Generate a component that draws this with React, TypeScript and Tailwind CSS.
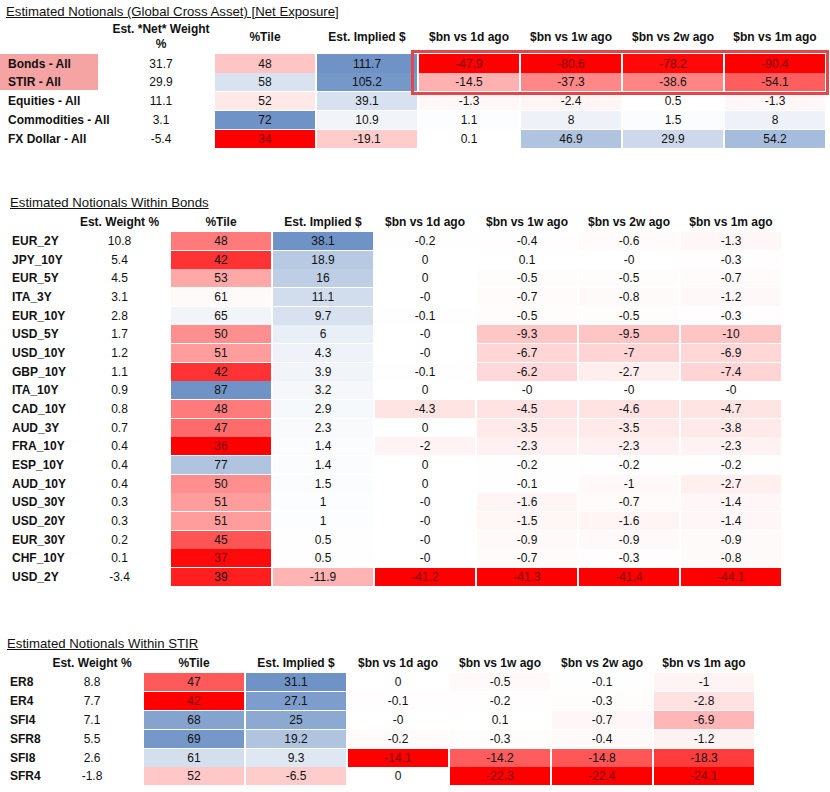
import React from "react";

const DARK_RED = "#7a0000";

function bgFor(t: number): string | undefined {
  if (t === 0) return undefined;
  if (t < 0) {
    const a = Math.min(1, -t);
    const c = Math.round(255 * (1 - a));
    return `rgb(255,${c},${c})`;
  }
  const a = Math.min(1, t);
  const r = Math.round(255 - a * (255 - 111));
  const g = Math.round(255 - a * (255 - 147));
  const b = Math.round(255 - a * (255 - 198));
  return `rgb(${r},${g},${b})`;
}

function Cell({ v, t }: { v: string; t: number }) {
  return (
    <div
      className="flex items-center justify-center"
      style={{ backgroundColor: bgFor(t), color: t <= -0.9 ? DARK_RED : undefined }}
    >
      {v}
    </div>
  );
}

type Pair = [string, number];

const topRows: { label: string; pink?: boolean; w: string; cells: Pair[] }[] = [
  { label: "Bonds - All", pink: true, w: "31.7", cells: [["48", -0.23], ["111.7", 1], ["-47.9", -1], ["-80.6", -1], ["-78.2", -0.97], ["-90.4", -1]] },
  { label: "STIR - All", pink: true, w: "29.9", cells: [["58", 0.27], ["105.2", 0.95], ["-14.5", -0.31], ["-37.3", -0.47], ["-38.6", -0.48], ["-54.1", -0.63]] },
  { label: "Equities - All", w: "11.1", cells: [["52", -0.09], ["39.1", 0.28], ["-1.3", -0.03], ["-2.4", -0.04], ["0.5", 0], ["-1.3", -0.03]] },
  { label: "Commodities - All", w: "3.1", cells: [["72", 1], ["10.9", 0.1], ["1.1", 0.02], ["8", 0.12], ["1.5", 0.03], ["8", 0.12]] },
  { label: "FX Dollar - All", w: "-5.4", cells: [["34", -1], ["-19.1", -0.2], ["0.1", 0], ["46.9", 0.55], ["29.9", 0.35], ["54.2", 0.62]] },
];

type SubRow = { label: string; w: string; tile: Pair; imp: Pair; ch: string[] };
const bondRows: SubRow[] = [
  { label: "EUR_2Y", w: "10.8", tile: ["48", -0.52], imp: ["38.1", 1], ch: ["-0.2", "-0.4", "-0.6", "-1.3"] },
  { label: "JPY_10Y", w: "5.4", tile: ["42", -0.8], imp: ["18.9", 0.5], ch: ["0", "0.1", "-0", "-0.3"] },
  { label: "EUR_5Y", w: "4.5", tile: ["53", -0.34], imp: ["16", 0.45], ch: ["0", "-0.5", "-0.5", "-0.7"] },
  { label: "ITA_3Y", w: "3.1", tile: ["61", -0.02], imp: ["11.1", 0.32], ch: ["-0", "-0.7", "-0.8", "-1.2"] },
  { label: "EUR_10Y", w: "2.8", tile: ["65", 0.1], imp: ["9.7", 0.28], ch: ["-0.1", "-0.5", "-0.5", "-0.3"] },
  { label: "USD_5Y", w: "1.7", tile: ["50", -0.44], imp: ["6", 0.15], ch: ["-0", "-9.3", "-9.5", "-10"] },
  { label: "USD_10Y", w: "1.2", tile: ["51", -0.39], imp: ["4.3", 0.11], ch: ["-0", "-6.7", "-7", "-6.9"] },
  { label: "GBP_10Y", w: "1.1", tile: ["42", -0.8], imp: ["3.9", 0.1], ch: ["-0.1", "-6.2", "-2.7", "-7.4"] },
  { label: "ITA_10Y", w: "0.9", tile: ["87", 1], imp: ["3.2", 0.07], ch: ["0", "-0", "-0", "-0"] },
  { label: "CAD_10Y", w: "0.8", tile: ["48", -0.52], imp: ["2.9", 0.06], ch: ["-4.3", "-4.5", "-4.6", "-4.7"] },
  { label: "AUD_3Y", w: "0.7", tile: ["47", -0.58], imp: ["2.3", 0.05], ch: ["0", "-3.5", "-3.5", "-3.8"] },
  { label: "FRA_10Y", w: "0.4", tile: ["36", -1], imp: ["1.4", 0.03], ch: ["-2", "-2.3", "-2.3", "-2.3"] },
  { label: "ESP_10Y", w: "0.4", tile: ["77", 0.55], imp: ["1.4", 0.03], ch: ["0", "-0.2", "-0.2", "-0.2"] },
  { label: "AUD_10Y", w: "0.4", tile: ["50", -0.44], imp: ["1.5", 0.03], ch: ["0", "-0.1", "-1", "-2.7"] },
  { label: "USD_30Y", w: "0.3", tile: ["51", -0.39], imp: ["1", 0.02], ch: ["-0", "-1.6", "-0.7", "-1.4"] },
  { label: "USD_20Y", w: "0.3", tile: ["51", -0.39], imp: ["1", 0.02], ch: ["-0", "-1.5", "-1.6", "-1.4"] },
  { label: "EUR_30Y", w: "0.2", tile: ["45", -0.67], imp: ["0.5", 0.01], ch: ["-0", "-0.9", "-0.9", "-0.9"] },
  { label: "CHF_10Y", w: "0.1", tile: ["37", -0.96], imp: ["0.5", 0.01], ch: ["-0", "-0.7", "-0.3", "-0.8"] },
  { label: "USD_2Y", w: "-3.4", tile: ["39", -0.88], imp: ["-11.9", -0.3], ch: ["-41.2", "-41.3", "-41.4", "-44.1"] },
];

const stirRows: SubRow[] = [
  { label: "ER8", w: "8.8", tile: ["47", -0.65], imp: ["31.1", 1], ch: ["0", "-0.5", "-0.1", "-1"] },
  { label: "ER4", w: "7.7", tile: ["42", -1], imp: ["27.1", 0.9], ch: ["-0.1", "-0.2", "-0.3", "-2.8"] },
  { label: "SFI4", w: "7.1", tile: ["68", 0.85], imp: ["25", 0.8], ch: ["-0", "0.1", "-0.7", "-6.9"] },
  { label: "SFR8", w: "5.5", tile: ["69", 0.95], imp: ["19.2", 0.55], ch: ["-0.2", "-0.3", "-0.4", "-1.2"] },
  { label: "SFI8", w: "2.6", tile: ["61", 0.3], imp: ["9.3", 0.22], ch: ["-14.1", "-14.2", "-14.8", "-18.3"] },
  { label: "SFR4", w: "-1.8", tile: ["52", -0.22], imp: ["-6.5", -0.2], ch: ["0", "-22.3", "-22.4", "-24.1"] },
];

function colMins(rows: SubRow[]): number[] {
  return [0, 1, 2, 3].map((i) => Math.min(...rows.map((r) => parseFloat(r.ch[i]))));
}

function chT(v: string, min: number): number {
  const n = parseFloat(v);
  if (n < 0 && min < 0) return -(n / min);
  return 0;
}

const CH_HEADERS = ["$bn vs 1d ago", "$bn vs 1w ago", "$bn vs 2w ago", "$bn vs 1m ago"];

function SubTable({
  title,
  rows,
  cols,
  rowH,
  labelPad,
}: {
  title: string;
  rows: SubRow[];
  cols: string;
  rowH: string;
  labelPad: string;
}) {
  const mins = colMins(rows);
  return (
    <div>
      <div className="h-[16px] leading-[16px] underline text-[13.2px] whitespace-nowrap">{title}</div>
      <div className="mt-[2px] flex flex-col gap-[2px]">
        <div className={`grid ${cols} gap-x-[2px] h-[17px] items-center font-bold`}>
          <div />
          <div className="text-center whitespace-nowrap">Est. Weight %</div>
          <div className="text-center">%Tile</div>
          <div className="text-center">Est. Implied $</div>
          {CH_HEADERS.map((h) => (
            <div key={h} className="text-center whitespace-nowrap">{h}</div>
          ))}
        </div>
        {rows.map((r) => (
          <div key={r.label} className={`grid ${cols} gap-x-[2px] ${rowH}`}>
            <div className={`flex items-center font-bold whitespace-nowrap ${labelPad}`}>{r.label}</div>
            <div className="flex items-center justify-center">{r.w}</div>
            <Cell v={r.tile[0]} t={r.tile[1]} />
            <Cell v={r.imp[0]} t={r.imp[1]} />
            {r.ch.map((v, i) => (
              <Cell key={i} v={v} t={chT(v, mins[i])} />
            ))}
          </div>
        ))}
      </div>
    </div>
  );
}

export default function App() {
  const topCols = "grid-cols-[107px_104px_repeat(6,100px)]";
  return (
    <div className="w-[830px] h-[792px] bg-white text-[#111] text-[12px] font-['Liberation_Sans',Arial,sans-serif] overflow-hidden">
      <div className="relative pt-[4px]">
        <div className="h-[16px] leading-[16px] underline pl-[6px] text-[13.2px] whitespace-nowrap">
          Estimated Notionals (Global Cross Asset) [Net Exposure]
        </div>
        <div className="mt-[2px] flex flex-col gap-[2px]">
          <div className={`grid ${topCols} gap-x-[2px] h-[30px] items-center font-bold`}>
            <div />
            <div className="text-center leading-[15px] whitespace-nowrap">
              Est. *Net* Weight
              <br />%
            </div>
            <div className="text-center">%Tile</div>
            <div className="text-center">Est. Implied $</div>
            {CH_HEADERS.map((h) => (
              <div key={h} className="text-center whitespace-nowrap">{h}</div>
            ))}
          </div>
          {topRows.map((r, idx) => (
            <div key={r.label} className={`grid ${topCols} gap-x-[2px] h-[17px]`}>
              <div
                className={`flex items-center font-bold pl-[8px] self-start whitespace-nowrap ${
                  r.pink ? "bg-[#f5a3a3] w-[98px]" : ""
                } ${r.pink && idx === 0 ? "h-[19px]" : "h-[17px]"}`}
              >
                {r.label}
              </div>
              <div className="flex items-center justify-center">{r.w}</div>
              {r.cells.map((c, i) => (
                <Cell key={i} v={c[0]} t={c[1]} />
              ))}
            </div>
          ))}
        </div>
        <div className="absolute left-[411px] top-[50px] w-[418px] h-[45px] border-[3px] border-[#e2474c] pointer-events-none" />
      </div>

      <div className="mt-[48px] pl-[10px]">
        <SubTable
          title="Estimated Notionals Within Bonds"
          rows={bondRows}
          cols="grid-cols-[58px_99px_repeat(6,100px)]"
          rowH="h-[16.67px]"
          labelPad="pl-[2px]"
        />
      </div>

      <div className="mt-[52px] pl-[7px]">
        <SubTable
          title="Estimated Notionals Within STIR"
          rows={stirRows}
          cols="grid-cols-[33px_100px_repeat(6,100px)]"
          rowH="h-[16.8px]"
          labelPad="pl-[3px]"
        />
      </div>
    </div>
  );
}
